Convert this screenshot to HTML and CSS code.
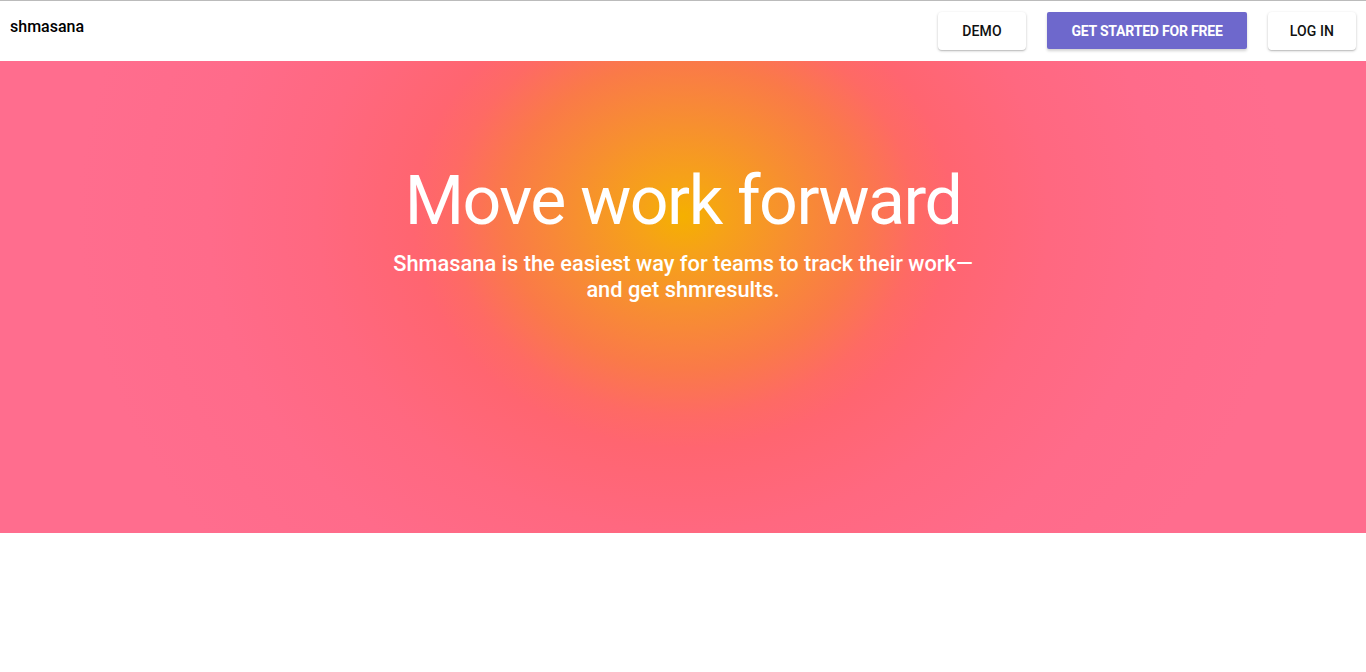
FILE: index.html
```html
<!DOCTYPE html>
<html>
<head>
<meta charset="utf-8">
<link rel="stylesheet" href="styles.css">
</head>
<body>
<header class="topbar">
  <div class="logo">shmasana</div>
  <nav class="actions">
    <button class="btn btn-light">Demo</button>
    <button class="btn btn-primary">Get started for free</button>
    <button class="btn btn-light">Log in</button>
  </nav>
</header>
<section class="hero">
  <h1 class="hero-title">Move work forward</h1>
  <p class="hero-sub">Shmasana is the easiest way for teams to track their work—<br>and get shmresults.</p>
</section>
</body>
</html>
```
FILE: styles.css
```css
html, body {
  margin: 0;
  padding: 0;
  background: #fff;
  font-family: Roboto, "Liberation Sans", sans-serif;
}
.topbar {
  height: 60px;
  border-top: 1px solid #bbbbbb;
  display: flex;
  align-items: flex-start;
  justify-content: space-between;
  padding: 0 10px;
  box-sizing: content-box;
}
.logo {
  font-size: 16px;
  font-weight: 500;
  color: #000;
  margin-top: 16px;
  line-height: 19px;
}
.actions {
  display: flex;
  gap: 21px;
  margin-top: 11px;
}
.btn {
  font-family: Roboto, "Liberation Sans", sans-serif;
  font-size: 14px;
  font-weight: 500;
  text-transform: uppercase;
  border: none;
  border-radius: 4px;
  height: 38px;
  padding: 0 8px;
  cursor: pointer;
  letter-spacing: 0.1px;
  line-height: 36px;
}
.btn-light {
  background: #fff;
  color: #111;
  width: 88px;
  box-shadow: 0 1px 3px rgba(0,0,0,0.2), 0 1px 1px rgba(0,0,0,0.12);
}
.btn-primary {
  background: #6e68cc;
  color: #fff;
  width: 200px;
  height: 37px;
  font-weight: 700;
  font-size: 14px;
  letter-spacing: -0.2px;
  border-radius: 2px;
  box-shadow: 0 2px 3px rgba(0,0,0,0.18);
}
.hero {
  height: 472px;
  background: radial-gradient(ellipse 270px 232px at 683px 155px,
    #f5b000 0%,
    #f6a218 16%,
    #f78f30 40%,
    #fa7a48 66%,
    #fe6a64 86%,
    #ff6570 100%,
    #ff6880 136%,
    #ff6b8a 176%,
    #ff6d8e 224%);
  display: flex;
  flex-direction: column;
  align-items: center;
  color: #fff;
  text-align: center;
}
.hero-title {
  margin: 98px 0 0;
  font-size: 68px;
  font-weight: 400;
  line-height: 84px;
  letter-spacing: -1.5px;
}
.hero-sub {
  margin: 8px 0 0;
  font-size: 21.8px;
  font-weight: 500;
  line-height: 26px;
}
```
